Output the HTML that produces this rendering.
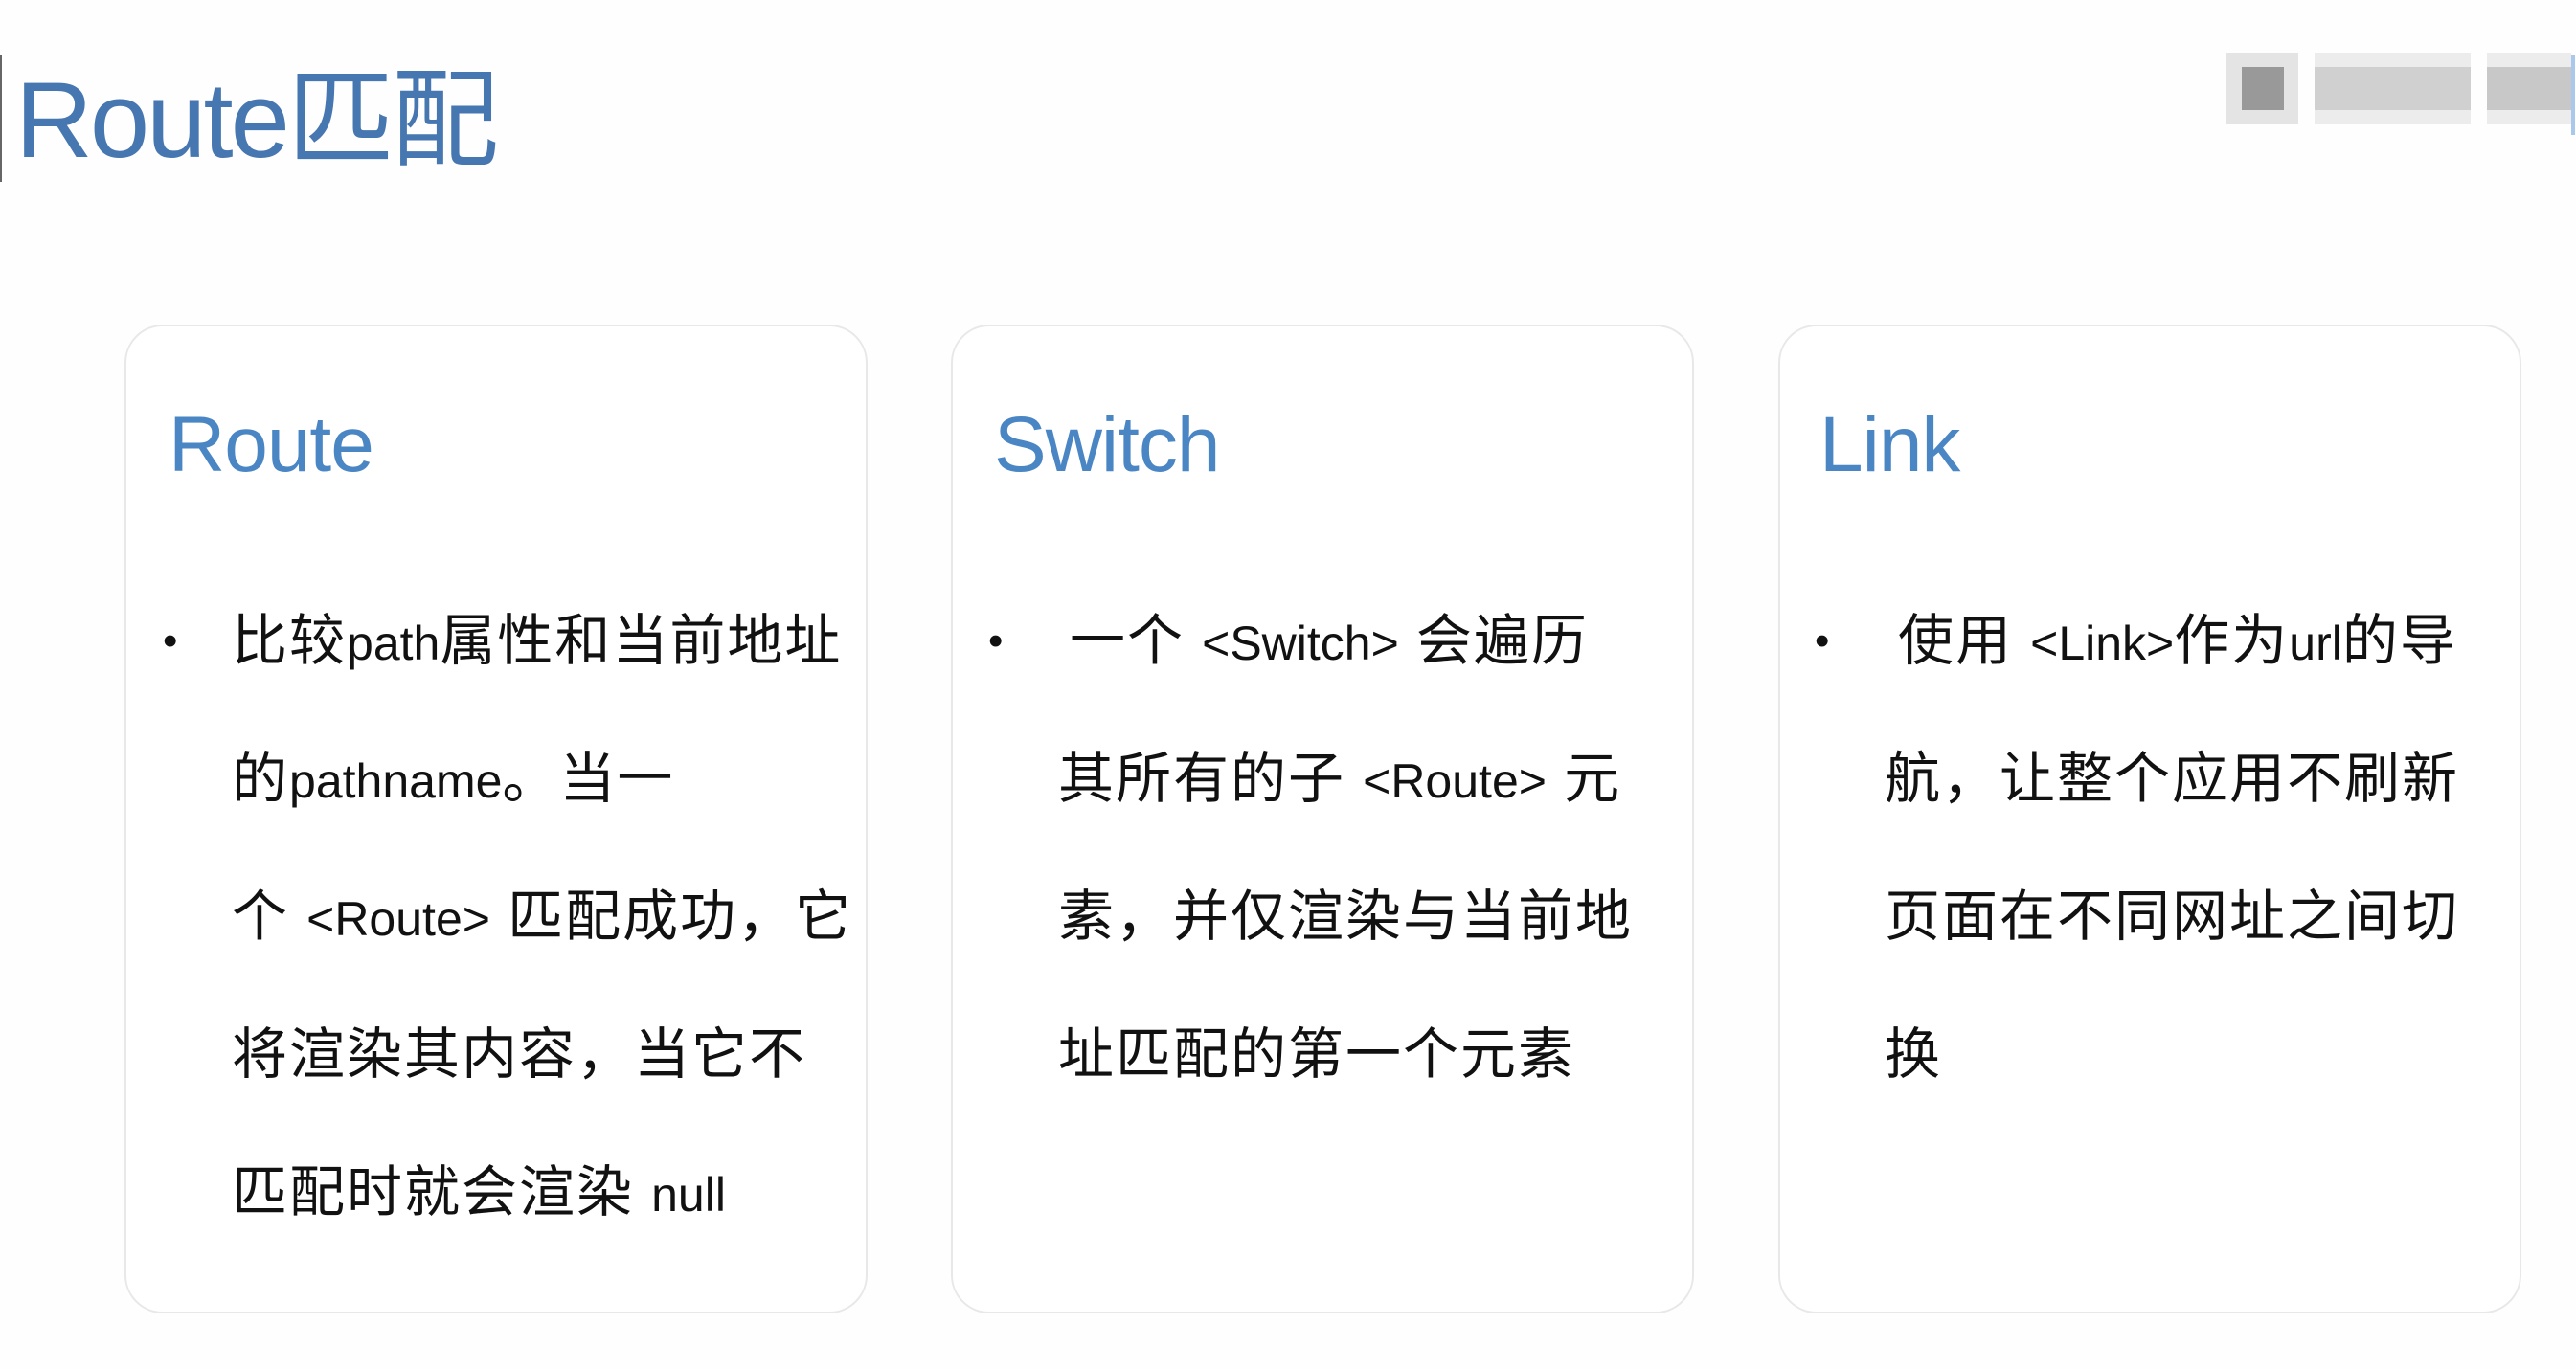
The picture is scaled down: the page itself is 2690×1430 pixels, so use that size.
<!DOCTYPE html>
<html><head><meta charset="utf-8"><style>
body{margin:0;width:2690px;height:1430px;background:#fefefe;position:relative;overflow:hidden;font-family:"Liberation Sans","Noto Sans CJK SC",sans-serif;}
.a{position:absolute;white-space:nowrap}
.card{position:absolute;top:339px;width:776px;height:1033px;border:2px solid #e8e8e8;border-radius:40px;box-sizing:border-box;background:#fff}
.h{position:absolute;font-size:82px;color:#4a86c4;line-height:82px;top:424px;letter-spacing:-1px}
.t{position:absolute;font-size:58px;line-height:60px;color:#111;white-space:nowrap;letter-spacing:2px}
.t span{font-size:50px;letter-spacing:0}
.b{position:absolute;font-size:44px;line-height:60px;color:#111}
</style></head><body>
<div class="a" style="left:0;top:57px;width:2px;height:133px;background:#666"></div>
<div class="a" style="left:16px;top:56px;font-size:112px;line-height:140px;color:#4677b0;letter-spacing:-3px">Route匹配</div>
<div class="a" style="left:2325px;top:55px;width:75px;height:75px;background:#e4e4e4"></div>
<div class="a" style="left:2341px;top:70px;width:44px;height:45px;background:#999"></div>
<div class="a" style="left:2417px;top:55px;width:163px;height:75px;background:#ececec"></div>
<div class="a" style="left:2417px;top:70px;width:163px;height:45px;background:#d0d0d0"></div>
<div class="a" style="left:2597px;top:55px;width:88px;height:75px;background:#ececec"></div>
<div class="a" style="left:2597px;top:70px;width:88px;height:45px;background:#c8c8c8"></div>
<div class="a" style="left:2685px;top:57px;width:4px;height:84px;background:#a9c8ec"></div>

<div class="card" style="left:130px"></div>
<div class="card" style="left:993px"></div>
<div class="card" style="left:1857px"></div>

<div class="h" style="left:176px">Route</div>
<div class="h" style="left:1038px">Switch</div>
<div class="h" style="left:1900px">Link</div>

<div class="b" style="left:170px;top:640px">•</div>
<div class="t" style="left:242px;top:640px">比较<span>path</span>属性和当前地址</div>
<div class="t" style="left:242px;top:784px">的<span>pathname</span>。当一</div>
<div class="t" style="left:242px;top:928px">个 <span>&lt;Route&gt;</span> 匹配成功，它</div>
<div class="t" style="left:242px;top:1072px">将渲染其内容，当它不</div>
<div class="t" style="left:242px;top:1216px">匹配时就会渲染 <span>null</span></div>

<div class="b" style="left:1032px;top:640px">•</div>
<div class="t" style="left:1117px;top:640px">一个 <span>&lt;Switch&gt;</span> 会遍历</div>
<div class="t" style="left:1105px;top:784px">其所有的子 <span>&lt;Route&gt;</span> 元</div>
<div class="t" style="left:1105px;top:928px">素，并仅渲染与当前地</div>
<div class="t" style="left:1105px;top:1072px">址匹配的第一个元素</div>

<div class="b" style="left:1895px;top:640px">•</div>
<div class="t" style="left:1982px;top:640px">使用 <span>&lt;Link&gt;</span>作为<span>url</span>的导</div>
<div class="t" style="left:1968px;top:784px">航，让整个应用不刷新</div>
<div class="t" style="left:1968px;top:928px">页面在不同网址之间切</div>
<div class="t" style="left:1968px;top:1072px">换</div>
</body></html>
